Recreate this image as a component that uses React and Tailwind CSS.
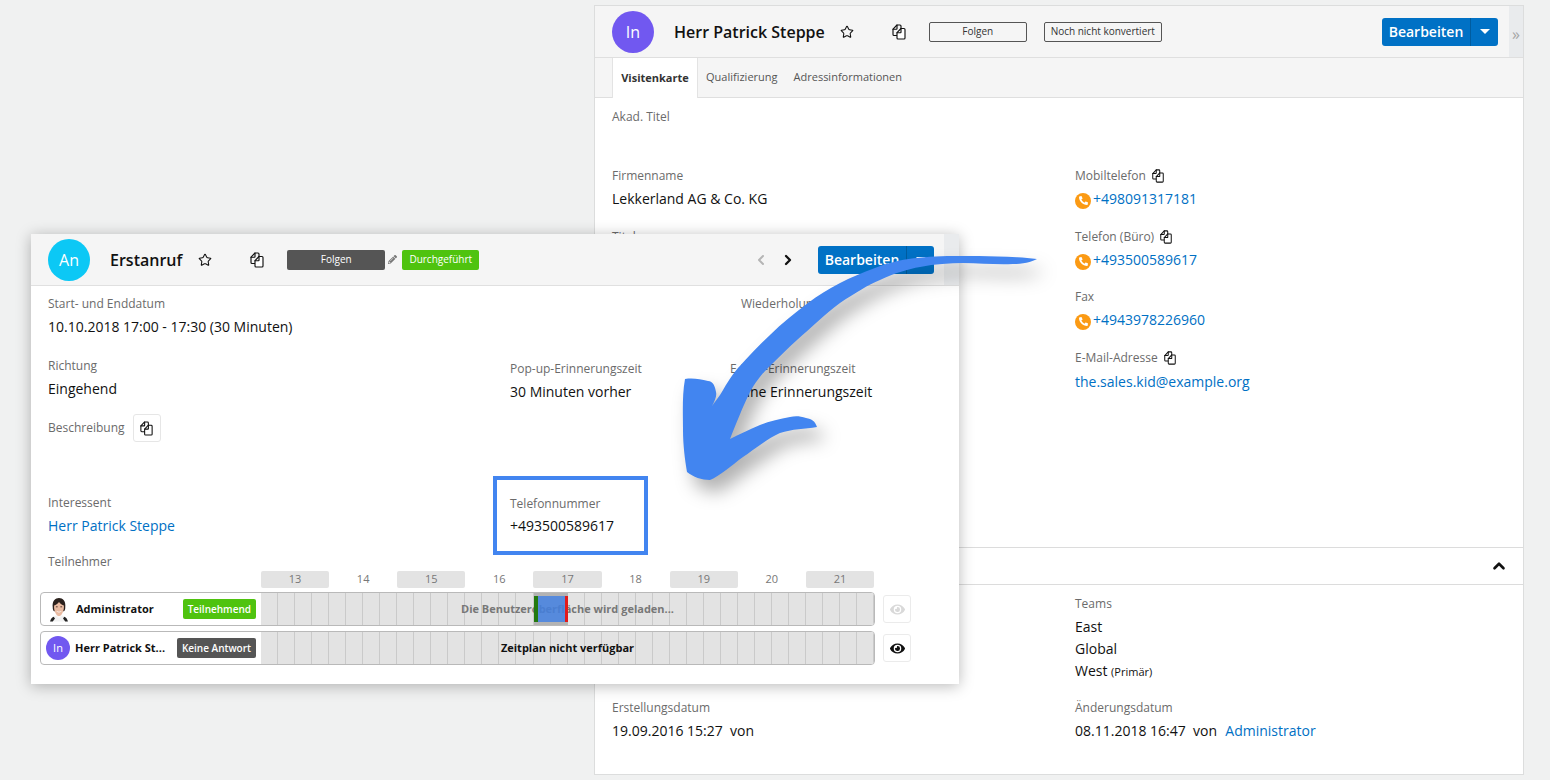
import React from "react";
import { Star, ChevronLeft, ChevronRight, ChevronUp } from "lucide-react";
import { FaEye, FaPencilAlt, FaPhoneAlt } from "react-icons/fa";

const CopyIcon = ({ className = "w-4 h-4" }) => (
  <svg viewBox="0 0 16 16" className={className} fill="none" stroke="#111" strokeWidth="1.15" strokeLinejoin="round" strokeLinecap="round">
    <path d="M6 11.500H3a1 1 0 0 1-1-1V5.200L6 1h3a1 1 0 0 1 1 1v2.500" />
    <path d="M2 5.200h3.500a.5 .5 0 0 0 .5-.5V1" />
    <path d="M10 4.500h3a1 1 0 0 1 1 1V14a1 1 0 0 1-1 1H7a1 1 0 0 1-1-1V8.700z" fill="#fff" />
    <path d="M6 8.700h3.500a.5 .5 0 0 0 .5-.5V4.500" />
  </svg>
);

const Caret = () => (
  <span className="w-0 h-0 border-x-[5px] border-x-transparent border-t-[5px] border-t-white" />
);

const Label = ({ children, className = "" }) => (
  <div className={`pt-[1px] text-[12px] leading-[18px] text-[#6b6b6b] ${className}`}>{children}</div>
);
const Value = ({ children, className = "" }) => (
  <div className={`text-[14px] leading-[22px] text-[#111] ${className}`}>{children}</div>
);
const Link = ({ children, className = "" }) => (
  <span className={`text-[#0070c4] ${className}`}>{children}</span>
);

const Phone = () => (
  <span className="inline-flex w-[16px] h-[16px] rounded-full bg-[#fb9a14] items-center justify-center mr-[2px] translate-y-[1px]">
    <FaPhoneAlt className="text-white w-[9px] h-[9px]" />
  </span>
);

const EditButton = () => (
  <div className="flex w-[116px] h-[28px] rounded-[3px] bg-[#0071c5] text-white">
    <div className="w-[89px] flex items-center justify-center text-[14px] font-semibold border-r border-[#005c9f]">Bearbeiten</div>
    <div className="flex-1 flex items-center justify-center"><Caret /></div>
  </div>
);

const ContactField = ({ label, copy, phone, value, mb = "mb-[17px]", mt = "mt-[3px]" }) => (
  <div className={mb}>
    <Label className="flex items-center gap-[5px]">
      {label}
      {copy && <CopyIcon className="w-[14px] h-[14px]" />}
    </Label>
    <Value className={mt}>
      {phone && <Phone />}
      <Link>{value}</Link>
    </Value>
  </div>
);

const BackWindow = () => (
  <div className="absolute left-[594px] top-[5px] w-[930px] h-[770px] bg-white border border-[#dcdddd] flex flex-col">
    <div className="flex h-[52px] bg-[#f5f5f5] border-b border-[#dfdfdf] shrink-0">
      <div className="flex-1 flex items-center pl-[17px] pr-[11px]">
        <div className="w-[42px] h-[42px] rounded-full bg-[#7158f0] text-white flex items-center justify-center text-[16px]">In</div>
        <div className="ml-[20px] text-[16px] font-semibold text-[#111]">Herr Patrick Steppe</div>
        <Star className="ml-[15px] w-[14px] h-[14px] text-[#111]" strokeWidth={1.8} />
        <CopyIcon className="ml-[37px] w-[16px] h-[16px]" />
        <div className="ml-[22px] w-[98px] h-[20px] border border-[#555] rounded-[2px] text-[10px] text-[#333] flex items-center justify-center">Folgen</div>
        <div className="ml-[17px] w-[118px] h-[20px] border border-[#555] rounded-[2px] text-[10px] text-[#333] flex items-center justify-center">Noch nicht konvertiert</div>
        <div className="ml-auto"><EditButton /></div>
      </div>
      <div className="w-[14px] bg-[#e9ebed] flex items-center justify-center text-[16px] text-[#a5a5a5] pt-[5px]">»</div>
    </div>
    <div className="flex h-[40px] bg-[#f5f5f5] border-b border-[#dfdfdf] pl-[17px] shrink-0">
      <div className="w-[86px] h-[40px] bg-white border-x border-[#e3e3e3] text-[11px] font-bold text-[#333] flex items-center justify-center">Visitenkarte</div>
      <div className="ml-[8px] h-full flex items-center text-[11px] text-[#555]">Qualifizierung</div>
      <div className="ml-[16px] h-full flex items-center text-[11px] text-[#555]">Adressinformationen</div>
    </div>
    <div className="grid grid-cols-[463px_1fr] h-[450px] px-[17px] border-b border-[#dcdcdc] shrink-0">
      <div className="pt-[9px]">
        <div className="h-[59px]"><Label>Akad. Titel</Label></div>
        <Label>Firmenname</Label>
        <Value className="mt-[3px] mb-[17px]">Lekkerland AG &amp; Co. KG</Value>
        <Label>Titel</Label>
      </div>
      <div className="pt-[68px]">
        <ContactField label="Mobiltelefon" copy phone value="+498091317181" />
        <ContactField label="Telefon (Büro)" copy phone value="+493500589617" mb="mb-[16px]" />
        <ContactField label="Fax" phone value="+4943978226960" />
        <ContactField label="E-Mail-Adresse" copy value="the.sales.kid@example.org" mt="mt-[4px]" />
      </div>
    </div>
    <div className="h-[37px] border-b border-[#dcdcdc] flex items-center justify-end pr-[15px] shrink-0">
      <ChevronUp className="w-[18px] h-[18px] text-[#111]" strokeWidth={3.5} />
    </div>
    <div className="grid grid-cols-[463px_1fr] px-[17px] pt-[9px]">
      <div className="pt-[104px]">
        <Label>Erstellungsdatum</Label>
        <Value className="mt-[3px]">19.09.2016 15:27&nbsp; von</Value>
      </div>
      <div>
        <Label>Teams</Label>
        <div className="mt-[3px] mb-[15px]">
          <Value>East</Value>
          <Value>Global</Value>
          <Value>West <span className="text-[11px]">(Primär)</span></Value>
        </div>
        <Label>Änderungsdatum</Label>
        <Value className="mt-[3px]">08.11.2018 16:47&nbsp; von&nbsp; <Link className="ml-[1px]">Administrator</Link></Value>
      </div>
    </div>
  </div>
);

const FaceAvatar = () => (
  <svg viewBox="0 0 24 28" className="w-[22px] h-[25px] ml-[7px]">
    <path d="M2 27.500c1-5 5-6 7-7l3 3 3-3c2 1 6 2 7 7z" fill="#f2f2f2" />
    <path d="M2 27.500c.5-3 2-4.500 4-5.500l1.500 2-2.500 3.500zM22 27.500c-.5-3-2-4.500-4-5.500l-1.500 2 2.500 3.500z" fill="#222" />
    <path d="M5 12C4 4 8 1 12 1s8 3 7 11c0 2-.5 3-1.500 4h-11C5.500 15 5 14 5 12z" fill="#2b211d" />
    <path d="M6.500 9.500c2-.5 4-2 5.500-4 1.500 2 3.500 3.500 5.500 4 .4 6-2.500 12-5.500 12s-6-6-5.500-12z" fill="#e9bba2" />
    <path d="M9 15.500c2 1.300 4 1.300 6 0-1 2.500-5 2.500-6 0z" fill="#fff" />
    <path d="M8.500 11h2M13.500 11h2" stroke="#4a2f25" strokeWidth="1" />
  </svg>
);

const cells = Array.from({ length: 36 }, (_, i) => i);

const Timeline = ({ children, selected }) => (
  <div className="relative flex-1 flex bg-[#e3e3e3] rounded-r-[3px] overflow-hidden">
    {cells.map((i) => (
      <div key={i} className="flex-1 border-r border-[#cacaca] last:border-r-0" />
    ))}
    {selected && <div className="absolute left-[273px] top-0 bottom-0 w-[34px] bg-[#b3b3b3]" />}
    {children}
    {selected && (
      <div className="absolute left-[273px] top-0 bottom-0 w-[34px] flex items-stretch py-[3px]">
        <div className="w-[4px] bg-[#23790f]" />
        <div className="flex-1 bg-[#3f7fe6]/80" />
        <div className="w-[3px] bg-[#e21a1a]" />
      </div>
    )}
  </div>
);

const Participant = ({ avatar, name, badge, badgeClass, selected, message, messageClass, eyeClass, nameClass }) => (
  <div className="flex items-center">
    <div className="w-[835px] h-[34px] flex border-[1.5px] border-[#b9b9b9] rounded-[4px] bg-white">
      <div className="w-[220px] flex items-center pr-[5px] shrink-0">
        {avatar}
        <span className={`text-[11px] font-bold text-[#111] ${nameClass}`}>{name}</span>
        <span className={`ml-auto h-[20px] px-[5px] rounded-[2px] text-white text-[10px] font-semibold flex items-center ${badgeClass}`}>{badge}</span>
      </div>
      <Timeline selected={selected}>
        <div className={`absolute inset-0 flex items-center justify-center text-[11px] font-bold ${messageClass}`}>{message}</div>
      </Timeline>
    </div>
    <div className={`ml-[8px] w-[28px] h-[28px] border border-[#ebebeb] rounded-[3px] bg-white flex items-center justify-center ${eyeClass}`}>
      <FaEye className="w-[15px] h-[15px]" />
    </div>
  </div>
);

const hours = [13, 14, 15, 16, 17, 18, 19, 20, 21];

const FrontWindow = () => (
  <div className="absolute left-[31px] top-[234px] w-[928px] h-[450px] bg-white shadow-[0_2px_14px_rgba(0,0,0,0.28)] flex flex-col">
    <div className="flex h-[52px] bg-[#f5f5f5] border-b border-[#e0e0e0] shrink-0">
      <div className="flex-1 flex items-center pl-[17px] pr-[10px]">
        <div className="w-[42px] h-[42px] rounded-full bg-[#0cc8f5] text-white flex items-center justify-center text-[16px]">An</div>
        <div className="ml-[20px] text-[16px] font-semibold text-[#111]">Erstanruf</div>
        <Star className="ml-[16px] w-[14px] h-[14px] text-[#111]" strokeWidth={1.8} />
        <CopyIcon className="ml-[37px] w-[16px] h-[16px]" />
        <div className="ml-[22px] w-[98px] h-[20px] bg-[#555] rounded-[2px] text-[10px] text-white flex items-center justify-center">Folgen</div>
        <FaPencilAlt className="ml-[3px] w-[9px] h-[9px] text-[#777]" />
        <div className="ml-[5px] w-[77px] h-[20px] bg-[#4fc30f] rounded-[2px] text-[10px] text-white flex items-center justify-center">Durchgeführt</div>
        <ChevronLeft className="ml-auto w-[16px] h-[16px] text-[#b5b5b5]" strokeWidth={3} />
        <ChevronRight className="ml-[11px] w-[16px] h-[16px] text-[#111]" strokeWidth={3.5} />
        <div className="ml-[22px]"><EditButton /></div>
      </div>
      <div className="w-[15px] bg-[#e9ebed]" />
    </div>
    <div className="grid grid-cols-[462px_220px_1fr] pl-[17px] pt-[8px] h-[70px] shrink-0">
      <div className="col-span-2">
        <Label>Start- und Enddatum</Label>
        <Value className="mt-[3px]">10.10.2018 17:00 - 17:30 (30 Minuten)</Value>
      </div>
      <Label className="ml-[11px]">Wiederholung</Label>
    </div>
    <div className="grid grid-cols-[462px_220px_1fr] pl-[17px] h-[58px] shrink-0">
      <div>
        <Label>Richtung</Label>
        <Value className="mt-[3px]">Eingehend</Value>
      </div>
      <div className="pt-[3px]">
        <Label>Pop-up-Erinnerungszeit</Label>
        <Value className="mt-[3px]">30 Minuten vorher</Value>
      </div>
      <div className="pt-[3px]">
        <Label>E-Mail-Erinnerungszeit</Label>
        <Value className="mt-[3px]">Keine Erinnerungszeit</Value>
      </div>
    </div>
    <div className="flex items-center pl-[17px] h-[28px] shrink-0">
      <Label className="mb-[2px]">Beschreibung</Label>
      <div className="ml-[8px] w-[28px] h-[28px] border border-[#e6e6e6] rounded-[3px] flex items-center justify-center">
        <CopyIcon className="w-[15px] h-[15px]" />
      </div>
    </div>
    <div className="grid grid-cols-[446px_1fr] pl-[16px] mt-[34px] h-[76px] shrink-0">
      <div className="pt-[17px] pl-[1px]">
        <Label>Interessent</Label>
        <Value className="mt-[3px]"><Link>Herr Patrick Steppe</Link></Value>
      </div>
      <div className="w-[155px] h-[79px] border-4 border-[#4285f0] bg-white pl-[13px] pt-[14px]">
        <Label>Telefonnummer</Label>
        <Value className="mt-[2px]">+493500589617</Value>
      </div>
    </div>
    <Label className="pl-[17px] shrink-0">Teilnehmer</Label>
    <div className="grid grid-cols-9 w-[613px] ml-[230px] h-[16px] shrink-0">
      {hours.map((h, i) => (
        <div key={h} className={`flex items-center justify-center text-[11px] text-[#777] rounded-[2px] ${i % 2 === 0 ? "bg-[#e3e3e3]" : ""}`}>{h}</div>
      ))}
    </div>
    <div className="ml-[9px] mt-[5px] flex flex-col gap-[5px]">
      <Participant
        avatar={<FaceAvatar />}
        name="Administrator"
        nameClass="ml-[6px]"
        badge="Teilnehmend"
        badgeClass="bg-[#4fc30f]"
        selected
        message="Die Benutzeroberfläche wird geladen..."
        messageClass="text-[#777]"
        eyeClass="text-[#d9d9d9]"
      />
      <Participant
        avatar={<div className="ml-[5px] w-[24px] h-[24px] rounded-full bg-[#7158f0] text-white flex items-center justify-center text-[11px]">In</div>}
        name="Herr Patrick St..."
        nameClass="ml-[5px]"
        badge="Keine Antwort"
        badgeClass="bg-[#555]"
        message="Zeitplan nicht verfügbar"
        messageClass="text-[#111]"
        eyeClass="text-[#111]"
      />
    </div>
  </div>
);

const Arrow = () => (
  <svg className="absolute left-0 top-0 w-[1550px] h-[780px] pointer-events-none drop-shadow-[8px_12px_9px_rgba(0,0,0,0.3)]" viewBox="0 0 1550 780">
    <path
      fill="#4285f0"
      d="M1037 259 C1010 256 985 256 960 256 C925 256 900 258 875 268 C850 277 828 288 808 303 C795 313 782 323 770 335 C758 346 748 357 738 368 C730 377 725 387 720 395 L712 406 C715 400 717 396 716 392 C715 386 713 381 708 381 C700 379 693 378 685 379 C682 395 683 415 683 430 C683 445 685 460 687 472 C693 477 702 480 710 480 C720 476 732 465 743 457 C755 449 768 438 780 433 C792 429 805 429 817 427 C815 421 812 419 806 418 C800 416 795 416 790 417 C780 419 770 421 760 425 C750 429 740 434 730 439 C736 424 743 406 750 392 C755 383 760 376 768 368 C778 358 787 349 797 340 C812 327 826 313 840 303 C855 293 868 285 880 280 C895 273 908 269 920 267 C935 264 950 263 963 263 C980 263 997 265 1013 264 C1022 264 1032 262 1037 259 Z"
    />
  </svg>
);

export default function App() {
  return (
    <div className="relative w-[1550px] h-[780px] overflow-hidden bg-[#f0f1f1] font-['Open_Sans',sans-serif]">
      <BackWindow />
      <FrontWindow />
      <Arrow />
    </div>
  );
}
